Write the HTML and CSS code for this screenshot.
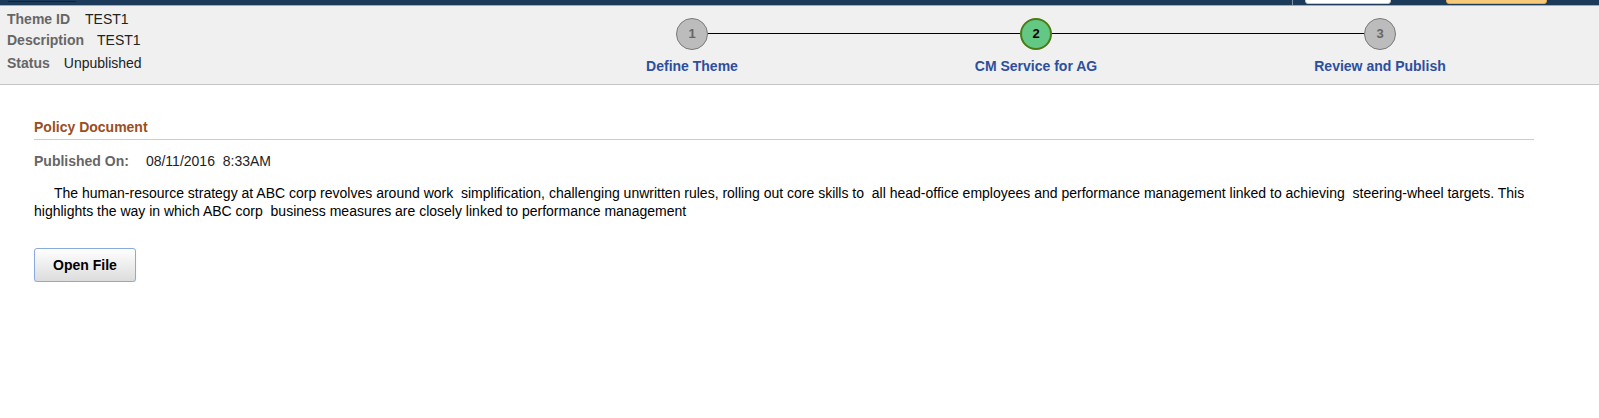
FILE: index.html
```html
<!DOCTYPE html>
<html lang="en">
<head>
    <meta charset="UTF-8">
    <title>Policy Document</title>
    <link rel="stylesheet" href="styles.css">
</head>
<body>
    <div class="topbar">
        <span class="top-home"></span>
        <span class="top-divider"></span>
        <span class="top-search"></span>
        <span class="top-action"></span>
    </div>
    <div class="header">
        <div class="theme-info">
            <div class="info-row"><span class="info-label">Theme ID</span><span class="info-value">TEST1</span></div>
            <div class="info-row desc"><span class="info-label">Description</span><span class="info-value">TEST1</span></div>
            <div class="info-row status"><span class="info-label">Status</span><span class="info-value">Unpublished</span></div>
        </div>
        <div class="steps">
            <div class="step done">
                <div class="step-circle">1</div>
                <div class="step-label">Define Theme</div>
            </div>
            <div class="step current">
                <div class="step-circle">2</div>
                <div class="step-label">CM Service for AG</div>
            </div>
            <div class="step">
                <div class="step-circle">3</div>
                <div class="step-label">Review and Publish</div>
            </div>
        </div>
    </div>
    <div class="content">
        <h2 class="section-title">Policy Document</h2>
        <div class="published"><span class="info-label">Published On:</span><span class="published-date">08/11/2016&nbsp; 8:33AM</span></div>
        <p class="policy-text">The human-resource strategy at ABC corp revolves around work &nbsp;simplification, challenging unwritten rules, rolling out core skills to &nbsp;all head-office employees and performance management linked to achieving &nbsp;steering-wheel targets. This highlights the way in which ABC corp &nbsp;business measures are closely linked to performance management</p>
        <button class="open-file">Open File</button>
    </div>
</body>
</html>
```

FILE: styles.css
```css
body {
    margin: 0;
    font-family: 'Liberation Sans', Arial, sans-serif;
    font-size: 14px;
    color: #000;
    background: #fff;
}
.topbar {
    position: relative;
    height: 5px;
    background-color: #1c3a59;
    border-bottom: 1px solid #8db0d6;
    overflow: hidden;
}
.top-home {
    position: absolute;
    left: 8px;
    top: 1px;
    width: 68px;
    height: 1px;
    background-color: #0f2338;
}
.top-divider {
    position: absolute;
    left: 1292px;
    top: 0;
    width: 1px;
    height: 5px;
    background-color: #7f93a8;
}
.top-search {
    position: absolute;
    left: 1305px;
    top: -10px;
    width: 84px;
    height: 12px;
    background-color: #fff;
    border: 1px solid #c7c7c7;
    border-radius: 3px;
}
.top-action {
    position: absolute;
    left: 1446px;
    top: -10px;
    width: 99px;
    height: 12px;
    background-color: #f9c97a;
    border: 1px solid #e8a94a;
    border-radius: 3px;
}
.header {
    display: flex;
    height: 78px;
    background-color: #f0f0f0;
    border-bottom: 1px solid #c6c6c6;
}
.theme-info {
    width: 513px;
    padding: 4px 0 0 7px;
}
.info-row {
    height: 21px;
    line-height: 19px;
}
.info-row.status {
    margin-top: 2px;
}
.info-label {
    font-weight: bold;
    color: #666;
    margin-right: 15px;
}
.info-value {
    color: #222;
}
.desc .info-label {
    margin-right: 13px;
}
.status .info-label {
    margin-right: 14px;
}
.steps {
    display: flex;
    width: 1032px;
    position: relative;
}
.steps::before {
    content: '';
    position: absolute;
    left: 172px;
    right: 172px;
    top: 27px;
    height: 1px;
    background-color: #000;
}
.step {
    flex: 1;
    display: flex;
    flex-direction: column;
    align-items: center;
    padding-top: 12px;
    position: relative;
}
.step-circle {
    width: 30px;
    height: 30px;
    border-radius: 50%;
    background-color: #bcbcbc;
    border: 1px solid #7a7a7a;
    color: #666;
    font-size: 13px;
    font-weight: bold;
    line-height: 30px;
    text-align: center;
}
.step.current .step-circle {
    width: 28px;
    height: 28px;
    line-height: 28px;
    background-color: #63c884;
    border: 2px solid #4a7b14;
    color: #000;
}
.step-label {
    margin-top: 8px;
    font-weight: bold;
    color: #2c4f9e;
}
.content {
    padding: 34px 65px 0 34px;
}
.section-title {
    margin: 0;
    font-size: 14px;
    font-weight: bold;
    color: #9a4e1c;
    padding-bottom: 4px;
    border-bottom: 1px solid #cccccc;
}
.published {
    margin-top: 12px;
    line-height: 18px;
}
.published .info-label {
    margin-right: 17px;
}
.published-date {
    color: #222;
}
.policy-text {
    margin: 14px 0 0;
    line-height: 18px;
    text-indent: 20px;
}
.open-file {
    margin-top: 28px;
    width: 102px;
    height: 34px;
    border: 1px solid #8aa9dc;
    border-radius: 3px;
    background: linear-gradient(#ffffff, #dcdcdc);
    box-shadow: 0 1px 1px rgba(0, 0, 0, 0.15);
    font-family: 'Liberation Sans', Arial, sans-serif;
    font-size: 14px;
    font-weight: bold;
    color: #000;
    cursor: pointer;
}
```
